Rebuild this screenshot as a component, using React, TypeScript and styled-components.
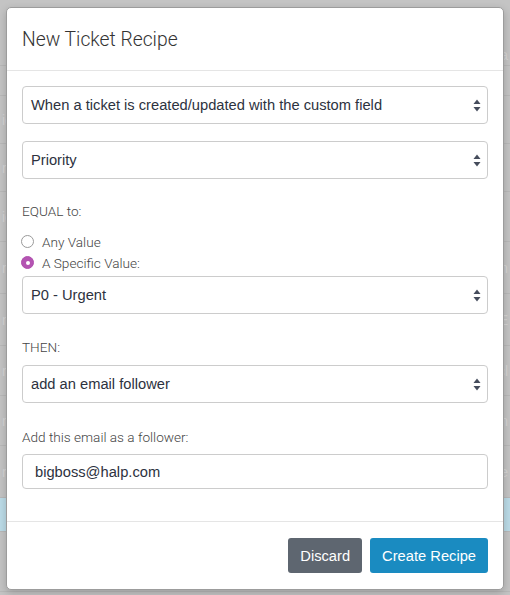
import React from "react";
import styled, { createGlobalStyle } from "styled-components";

const GlobalStyle = createGlobalStyle`
	html, body {
		margin: 0;
		padding: 0;
		background: #c4c4c4;
	}
	* {
		box-sizing: border-box;
	}
`;

const Page = styled.div`
	position: relative;
	width: 510px;
	height: 595px;
	overflow: hidden;
	background: #c4c4c4;
	font-family: "Liberation Sans", Arial, sans-serif;
`;

const Backdrop = styled.div`
	display: flex;
	flex-direction: column;
	padding-top: 44px;
`;

const BackRow = styled.div<{ $h: number; $active?: boolean }>`
	height: ${(p) => p.$h}px;
	display: flex;
	align-items: center;
	justify-content: space-between;
	padding: 0 2px;
	border-bottom: 1px solid #b9b9b9;
	background: ${(p) => (p.$active ? "#bcdce8" : "transparent")};
	color: #d6d6d6;
	font-size: 14px;
`;

const Modal = styled.div`
	position: absolute;
	left: 6px;
	top: 7px;
	width: 498px;
	height: 583px;
	background: #fff;
	border: 1px solid #9c9c9c;
	border-radius: 5px;
	box-shadow: 0 3px 9px rgba(0, 0, 0, 0.2);
	display: flex;
	flex-direction: column;
`;

const Header = styled.div`
	height: 63px;
	padding: 0 15px;
	display: flex;
	align-items: center;
	border-bottom: 1px solid #e5e5e5;
`;

const Title = styled.h4`
	margin: 0;
	font-family: Roboto, "Liberation Sans", sans-serif;
	font-weight: 300;
	font-size: 19.3px;
	color: #333;
`;

const Body = styled.div`
	flex: 1;
	padding: 15px 15px 0;
	display: flex;
	flex-direction: column;
`;

const Select = styled.div<{ $mt?: number }>`
	height: 38px;
	margin-top: ${(p) => p.$mt ?? 0}px;
	border: 1px solid #ccc;
	border-radius: 4px;
	padding: 0 6px 0 8px;
	display: flex;
	align-items: center;
	justify-content: space-between;
	font-size: 14.7px;
	color: #2d3240;
`;

const Label = styled.div<{ $mt: number }>`
	margin-top: ${(p) => p.$mt}px;
	height: 20px;
	line-height: 20px;
	font-family: Roboto, "Liberation Sans", sans-serif;
	font-weight: 300;
	font-size: 13.6px;
	color: #444;
`;

const RadioList = styled.div`
	margin-top: 10px;
	margin-bottom: 3px;
	display: flex;
	flex-direction: column;
`;

const RadioRow = styled.div`
	height: 21px;
	display: flex;
	align-items: center;
	gap: 8px;
	font-family: Roboto, "Liberation Sans", sans-serif;
	font-weight: 300;
	font-size: 13.6px;
	color: #444;
`;

const Radio = styled.span<{ $checked?: boolean }>`
	width: 13px;
	height: 13px;
	margin-left: -1px;
	border-radius: 50%;
	border: 1px solid ${(p) => (p.$checked ? "#b04fae" : "#9a9a9a")};
	background: ${(p) => (p.$checked ? "#b454b2" : "#fff")};
	display: flex;
	align-items: center;
	justify-content: center;
	&::after {
		content: "";
		width: 4px;
		height: 4px;
		border-radius: 50%;
		background: ${(p) => (p.$checked ? "#fff" : "transparent")};
	}
`;

const Input = styled.div`
	margin-top: 7px;
	height: 35px;
	border: 1px solid #ccc;
	border-radius: 4px;
	padding: 0 12px;
	display: flex;
	align-items: center;
	font-size: 14.7px;
	color: #2d3240;
`;

const Footer = styled.div`
	height: 68px;
	border-top: 1px solid #e5e5e5;
	padding: 0 15px;
	display: flex;
	align-items: center;
	justify-content: flex-end;
	gap: 8px;
`;

const Button = styled.button<{ $primary?: boolean }>`
	height: 35px;
	padding: 0 12px;
	border: 0;
	border-radius: 3px;
	background: ${(p) => (p.$primary ? "#1a8bc1" : "#5e6670")};
	color: #fff;
	font-family: "Liberation Sans", Arial, sans-serif;
	font-size: 14.7px;
`;

const Arrows = () => (
	<svg width="8" height="13" viewBox="0 0 8 13">
		<path d="M4 0.5 L7.5 5 L0.5 5 Z" fill="#454c5c" />
		<path d="M4 12.5 L7.5 8 L0.5 8 Z" fill="#454c5c" />
	</svg>
);

const backRows = [
	{ h: 22, t: "", r: "ca" },
	{ h: 30, t: "", r: "" },
	{ h: 48, t: "ic", r: "" },
	{ h: 48, t: "rk", r: "" },
	{ h: 50, t: "ic", r: "" },
	{ h: 52, t: "rk", r: "m" },
	{ h: 52, t: "ne", r: "E" },
	{ h: 50, t: "r", r: "cl" },
	{ h: 50, t: "ne", r: "n" },
	{ h: 52, t: "rk", r: "le" },
	{ h: 34, t: "", r: "", active: true },
	{ h: 60, t: "", r: "" },
];

const App = () => {
	return (
		<Page>
			<GlobalStyle />
			<Backdrop>
				{backRows.map((r, i) => (
					<BackRow key={i} $h={r.h} $active={r.active}>
						<span>{r.t}</span>
						<span>{r.r}</span>
					</BackRow>
				))}
			</Backdrop>
			<Modal>
				<Header>
					<Title>New Ticket Recipe</Title>
				</Header>
				<Body>
					<Select>
						<span>When a ticket is created/updated with the custom field</span>
						<Arrows />
					</Select>
					<Select $mt={17}>
						<span>Priority</span>
						<Arrows />
					</Select>
					<Label $mt={22}>EQUAL to:</Label>
					<RadioList>
						<RadioRow>
							<Radio />
							Any Value
						</RadioRow>
						<RadioRow>
							<Radio $checked />
							A Specific Value:
						</RadioRow>
					</RadioList>
					<Select>
						<span>P0 - Urgent</span>
						<Arrows />
					</Select>
					<Label $mt={23}>THEN:</Label>
					<Select $mt={8}>
						<span>add an email follower</span>
						<Arrows />
					</Select>
					<Label $mt={24}>Add this email as a follower:</Label>
					<Input>bigboss@halp.com</Input>
				</Body>
				<Footer>
					<Button>Discard</Button>
					<Button $primary>Create Recipe</Button>
				</Footer>
			</Modal>
		</Page>
	);
};

export default App;
